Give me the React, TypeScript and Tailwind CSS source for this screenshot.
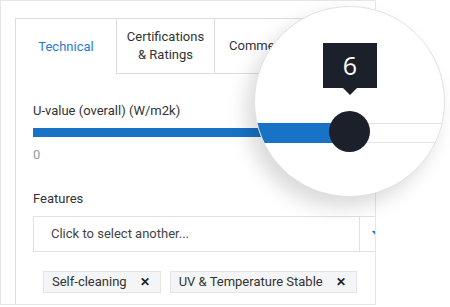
const tags = ['Self-cleaning', 'UV & Temperature Stable']

function Magnifier() {
  return (
    <div className="absolute left-[254px] top-[6px] w-[191px] h-[191px] rounded-full bg-white border border-[#e2e2e2] shadow-[-8px_10px_20px_rgba(0,0,0,0.15)] overflow-hidden">
      {/* magnified track */}
      <div className="absolute left-0 right-0 top-[116px] h-[20px] bg-white border-y border-[#e3e3e3]" />
      <div className="absolute left-0 w-[95px] top-[116px] h-[20px] bg-[#1872c5]" />
      <div className="absolute left-[74px] top-[104px] w-[41px] h-[41px] rounded-full bg-[#1b202b]" />
      {/* tooltip */}
      <div className="absolute left-[68px] top-[36px] w-[54px] h-[45px] bg-[#1b202b] flex items-center justify-center">
        <span className="text-white text-[25px] font-['Open_Sans',sans-serif] leading-none">6</span>
      </div>
      <div className="absolute left-[87px] top-[80px] w-0 h-0 border-l-[8px] border-r-[8px] border-t-[8px] border-l-transparent border-r-transparent border-t-[#1b202b]" />
    </div>
  )
}

export default function App() {
  return (
    <div className="relative w-[450px] h-[307px] bg-white font-['Roboto',sans-serif] text-[13px] text-[#333]">
      <div className="w-[376px] h-[305px] border border-[#e6e6e6] pl-[14px] pt-[17px] overflow-hidden">
        <div className="w-[440px] h-[300px] border-l border-t border-[#dddddd]">
          {/* tabs */}
          <div className="flex h-[55px]">
            <div className="w-[100px] flex items-center justify-center text-[#2a7bcd]">Technical</div>
            <div className="w-[98px] flex items-center justify-center text-center leading-[18px] border-l border-b border-[#dddddd]">
              Certifications<br />&amp; Ratings
            </div>
            <div className="flex-1 flex items-center pl-[14px] border-l border-b border-[#dddddd]">Comments</div>
          </div>

          <div className="pl-[17px]">
            <div className="mt-[29px] leading-4">U-value (overall) (W/m2k)</div>
            <div className="mt-[9px] h-[9px] w-[400px] bg-[#1872c5]" />
            <div className="mt-[10px] leading-4 text-[#9a9a9a]">0</div>

            <div className="mt-[28px] leading-4">Features</div>
            <div className="mt-[9px] h-[36px] w-[380px] flex border border-[#e2e2e2]">
              <div className="w-[325px] flex items-center pl-[17px] text-[#444]">Click to select another...</div>
              <div className="flex-1 border-l border-[#e2e2e2] flex items-center pl-[12px] pb-[2px]">
                <div className="w-0 h-0 border-l-[4px] border-r-[4px] border-t-[5px] border-l-transparent border-r-transparent border-t-[#1872c5]" />
              </div>
            </div>

            <div className="mt-[19px] ml-[10px] flex gap-[9px]">
              {tags.map(t => (
                <div key={t} className="h-[22px] flex items-center gap-[13px] pl-[8px] pr-[10px] bg-[#f4f5f6] border border-[#e3e3e3]">
                  <span>{t}</span>
                  <span className="font-bold text-[12px] text-[#222] leading-none">✕</span>
                </div>
              ))}
            </div>
          </div>
        </div>
      </div>
      <Magnifier />
    </div>
  )
}
